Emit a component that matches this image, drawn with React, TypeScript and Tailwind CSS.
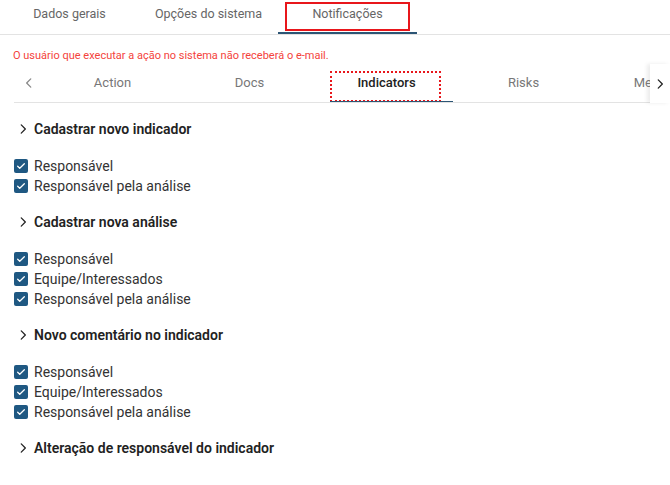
import React from "react";

const topTabs = ["Dados gerais", "Opções do sistema", "Notificações"];
const subTabs = ["Action", "Docs", "Indicators", "Risks", "Meetings"];

const sections: { title: string; items: string[] }[] = [
  { title: "Cadastrar novo indicador", items: ["Responsável", "Responsável pela análise"] },
  { title: "Cadastrar nova análise", items: ["Responsável", "Equipe/Interessados", "Responsável pela análise"] },
  { title: "Novo comentário no indicador", items: ["Responsável", "Equipe/Interessados", "Responsável pela análise"] },
  { title: "Alteração de responsável do indicador", items: [] },
];

const Chevron = ({ dir }: { dir: "left" | "right" }) => (
  <svg width="14" height="14" viewBox="0 0 24 24" fill="none" stroke="currentColor" strokeWidth={2.2} strokeLinecap="round" strokeLinejoin="round">
    {dir === "left" ? <path d="M15 5l-7 7 7 7" /> : <path d="M9 5l7 7-7 7" />}
  </svg>
);

const CheckBox = () => (
  <span className="flex h-[14px] w-[14px] items-center justify-center rounded-[2px] bg-[#1f5882]">
    <svg width="10" height="10" viewBox="0 0 24 24" fill="none" stroke="#fff" strokeWidth={3} strokeLinecap="round" strokeLinejoin="round">
      <path d="M4 12.5l5 5L20 6.5" />
    </svg>
  </span>
);

export default function App() {
  return (
    <div className="h-[485px] w-[670px] overflow-hidden bg-white font-['Roboto',sans-serif] text-[#333]">
      {/* top tabs */}
      <div className="flex h-[35px] border-b border-[#e3e3e3]">
        {topTabs.map((t, i) => (
          <div key={t} className="relative flex w-[139px] items-center justify-center pb-[6px] text-[12.5px] text-[#666]">
            {t}
            {i === 2 && (
              <>
                <span className="absolute left-[7px] right-[7px] top-[2px] h-[29px] border-2 border-[#e8161b]" />
                <span className="absolute bottom-0 left-0 right-0 h-[2px] bg-[#2c5575]" />
              </>
            )}
          </div>
        ))}
      </div>

      <p className="pl-[13px] pt-[14px] text-[11px] leading-[14px] text-[#f4433c]">
        O usuário que executar a ação no sistema não receberá o e-mail.
      </p>

      {/* sub tabs */}
      <div className="ml-[14px] mt-[1px] flex h-[39px]">
        <div className="flex w-[30px] items-center justify-center border-b border-[#e3e3e3] text-[#888]">
          <Chevron dir="left" />
        </div>
        <div className="flex flex-1 overflow-hidden border-b border-[#e3e3e3]">
          {subTabs.map((t) => (
            <div
              key={t}
              className={`relative flex w-[137px] shrink-0 items-center justify-center text-[13px] ${
                t === "Indicators" ? "font-medium text-[#222]" : "text-[#777]"
              }`}
            >
              {t}
              {t === "Indicators" && (
                <>
                  <span className="absolute bottom-0 left-[12px] top-[7px] w-[111px] border-2 border-dotted border-[#e8161b]" />
                  <span className="absolute bottom-[-1px] left-[12px] h-[2px] w-[123px] bg-[#2c5575]" />
                </>
              )}
            </div>
          ))}
        </div>
        <div className="flex w-[20px] items-center justify-center bg-white text-[#222] shadow-[-3px_0_4px_rgba(0,0,0,0.08)]">
          <Chevron dir="right" />
        </div>
      </div>

      {/* body */}
      <div className="pl-[14px] pt-[16px]">
        {sections.map((s) => (
          <div key={s.title} className="mb-[16px]">
            <div className="flex h-[20px] items-center gap-[4px] pl-[2px] text-[14px] font-semibold text-[#222]">
              <Chevron dir="right" />
              <span>{s.title}</span>
            </div>
            {s.items.length > 0 && (
              <div className="mt-[17px] flex flex-col">
                {s.items.map((it) => (
                  <label key={it} className="flex h-[20px] items-center gap-[6px] text-[14px] text-[#333]">
                    <CheckBox />
                    <span>{it}</span>
                  </label>
                ))}
              </div>
            )}
          </div>
        ))}
      </div>
    </div>
  );
}
